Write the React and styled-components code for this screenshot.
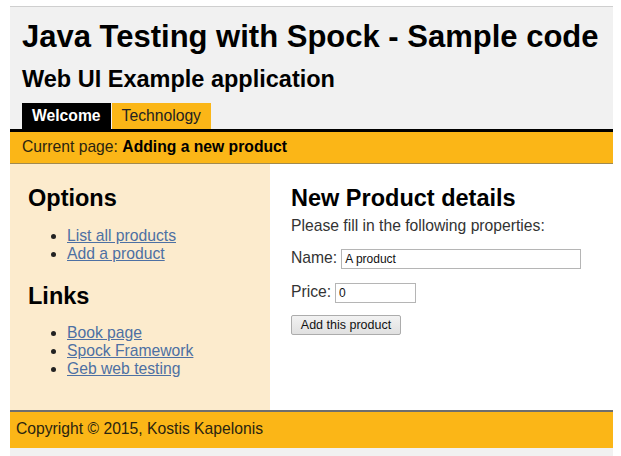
import React from 'react';
import styled, { createGlobalStyle } from 'styled-components';

const ORANGE = '#fbb617';

const GlobalStyle = createGlobalStyle`
  body {
    margin: 0;
    background: #fff;
    font-family: "Liberation Sans", Arial, sans-serif;
    color: #222;
    overflow: hidden;
  }
`;

const Page = styled.div`
  padding: 6px 8px 0 10px;
`;

const Frame = styled.div`
  border-top: 1px solid #cfcfcf;
  background: #f1f1f1;
  padding-bottom: 9px;
`;

const Header = styled.header`
  padding: 13px 12px 0;
`;

const Title = styled.h1`
  margin: 0;
  font-size: 31px;
  line-height: 34px;
  font-weight: bold;
  color: #000;
`;

const Subtitle = styled.h2`
  margin: 12px 0 0;
  font-size: 23.5px;
  line-height: 26px;
  font-weight: bold;
  color: #000;
`;

const Tabs = styled.nav`
  display: flex;
  gap: 1px;
  margin-top: 11px;
`;

const Tab = styled.a`
  display: block;
  height: 26px;
  line-height: 26px;
  padding: 0 10px;
  font-size: 15.7px;
  text-decoration: none;
  background: ${(p) => (p.$active ? '#000' : ORANGE)};
  color: ${(p) => (p.$active ? '#fff' : '#222')};
  font-weight: ${(p) => (p.$active ? 'bold' : 'normal')};
`;

const CurrentBar = styled.div`
  border-top: 3px solid #000;
  border-bottom: 1px solid #a08a50;
  background: ${ORANGE};
  height: 31px;
  line-height: 29px;
  padding-left: 12px;
  font-size: 15.7px;
  color: #2a2410;

  b {
    color: #000;
  }
`;

const Main = styled.div`
  display: grid;
  grid-template-columns: 260px 1fr;
`;

const Sidebar = styled.aside`
  background: #fcebcd;
  padding: 21px 18px 32px;
`;

const SectionTitle = styled.h2`
  margin: ${(p) => p.$top || 0}px 0 0;
  font-size: 23.5px;
  line-height: 26px;
  font-weight: bold;
  color: #000;
`;

const LinkList = styled.ul`
  margin: ${(p) => p.$top}px 0 0;
  padding-left: 39px;
  font-size: 15.7px;
  line-height: 18px;
`;

const Link = styled.a`
  color: #4d70a3;
  text-decoration: underline;
`;

const Content = styled.section`
  background: #fff;
  padding: 21px 21px;
`;

const Intro = styled.p`
  margin: 6px 0 0;
  font-size: 15.7px;
  line-height: 18px;
  color: #333;
`;

const Form = styled.form`
  display: flex;
  flex-direction: column;
  align-items: flex-start;
  gap: 13.5px;
  margin-top: 14px;
`;

const Field = styled.label`
  display: flex;
  align-items: flex-start;
  gap: 4px;
  font-size: 15.7px;
  line-height: 18px;
  color: #333;
`;

const Input = styled.input`
  box-sizing: border-box;
  width: ${(p) => p.$width}px;
  height: 20px;
  margin: 0;
  padding: 1px 3px;
  border: 1px solid #b5b5b5;
  background: #fff;
  font-family: "Liberation Sans", Arial, sans-serif;
  font-size: 12px;
  color: #111;
`;

const Button = styled.button`
  box-sizing: border-box;
  width: 110px;
  height: 20px;
  margin-top: -1px;
  padding: 0;
  border: 1px solid #acacac;
  border-radius: 2px;
  background: linear-gradient(#f2f2f2, #e0e0e0);
  font-family: "Liberation Sans", Arial, sans-serif;
  font-size: 12.5px;
  color: #111;
`;

const Footer = styled.footer`
  border-top: 2px solid #6e6e6e;
  background: ${ORANGE};
  height: 36px;
  line-height: 33px;
  padding-left: 6px;
  font-size: 15.7px;
  color: #2a2410;
`;

export default function App() {
  return (
    <Page>
      <GlobalStyle />
      <Frame>
        <Header>
          <Title>Java Testing with Spock - Sample code</Title>
          <Subtitle>Web UI Example application</Subtitle>
          <Tabs>
            <Tab $active>Welcome</Tab>
            <Tab>Technology</Tab>
          </Tabs>
        </Header>
        <CurrentBar>
          Current page: <b>Adding a new product</b>
        </CurrentBar>

        <Main>
          <Sidebar>
            <SectionTitle>Options</SectionTitle>
            <LinkList $top={16}>
              <li><Link href="#">List all products</Link></li>
              <li><Link href="#">Add a product</Link></li>
            </LinkList>
            <SectionTitle $top={20}>Links</SectionTitle>
            <LinkList $top={15}>
              <li><Link href="#">Book page</Link></li>
              <li><Link href="#">Spock Framework</Link></li>
              <li><Link href="#">Geb web testing</Link></li>
            </LinkList>
          </Sidebar>

          <Content>
            <SectionTitle>New Product details</SectionTitle>
            <Intro>Please fill in the following properties:</Intro>
            <Form onSubmit={(e) => e.preventDefault()}>
              <Field>
                Name: <Input $width={240} defaultValue="A product" />
              </Field>
              <Field>
                Price: <Input $width={81} defaultValue="0" />
              </Field>
              <Button type="submit">Add this product</Button>
            </Form>
          </Content>
        </Main>

        <Footer>Copyright © 2015, Kostis Kapelonis</Footer>
      </Frame>
    </Page>
  );
}
